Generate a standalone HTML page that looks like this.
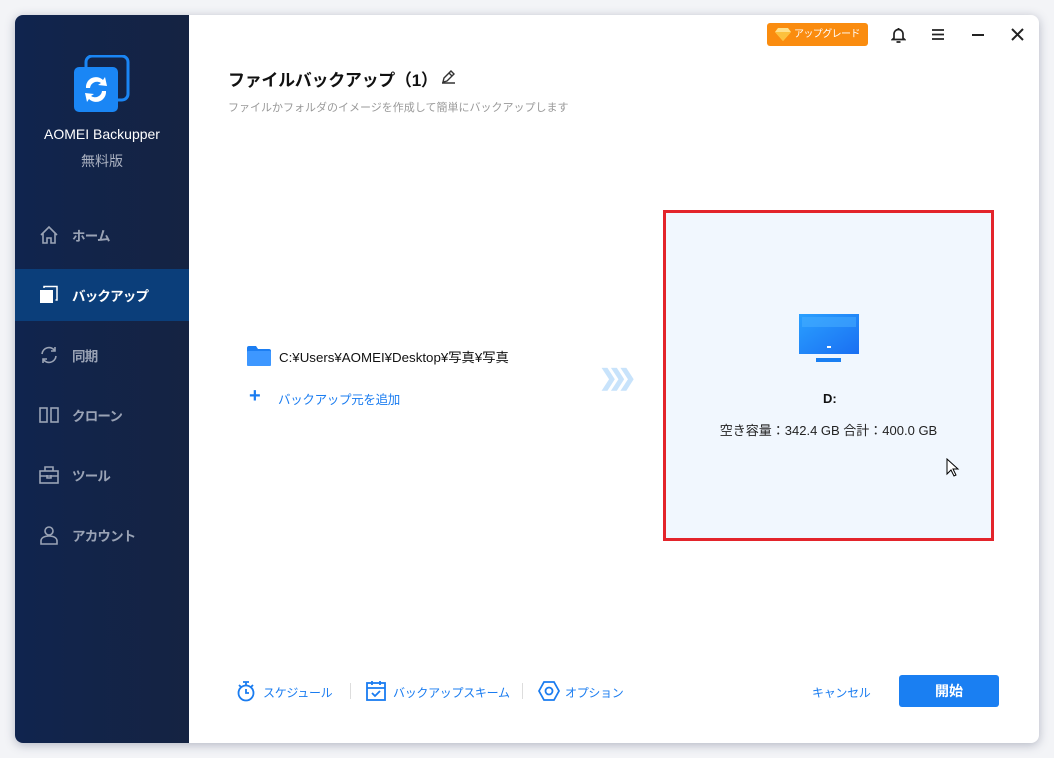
<!DOCTYPE html>
<html><head><meta charset="utf-8"><style>
*{margin:0;padding:0;box-sizing:border-box}
body{width:1054px;height:758px;background:#f3f4f7;font-family:"Liberation Sans","Noto Sans CJK JP",sans-serif;position:relative;overflow:hidden}
.win{position:absolute;left:15px;top:15px;width:1024px;height:728px;background:#fff;border-radius:8px;overflow:hidden;box-shadow:0 2px 10px rgba(60,70,100,.35)}
.side{position:absolute;left:0;top:0;width:174px;height:728px;background:linear-gradient(90deg,#10244e,#152342)}
.logo{position:absolute;left:58px;top:40px}
.brand{position:absolute;left:0;width:174px;text-align:center;color:#fff;font-size:14px;top:111px}
.free{position:absolute;left:0;width:174px;text-align:center;color:#aab1c0;font-size:14px;top:136px}
.item{position:absolute;left:0;width:174px;height:52px;display:flex;align-items:center;padding-left:24px;color:#9aa3b5;font-size:13.5px;font-weight:bold;letter-spacing:-0.8px}
.item svg{margin-right:13px}
.item.act{background:#0b3e7a;color:#fff}
.t{position:absolute;color:#111;font-size:17px;font-weight:bold;left:213px;top:51px;letter-spacing:-0.3px}
.sub{position:absolute;left:213px;top:84px;color:#999;font-size:11px}
.blue{color:#1a7cf0}
.box{position:absolute;left:648px;top:195px;width:331px;height:331px;background:#f1f7fe;border:3px solid #e3242b}
.btn{position:absolute;left:884px;top:660px;width:100px;height:32px;background:#1a7ff2;color:#fff;border-radius:3px;font-size:14px;font-weight:bold;text-align:center;line-height:32px}
.bl{position:absolute;font-size:12px;top:669px;letter-spacing:-0.3px}
</style></head><body>
<div class="win">
<div class="side">
<svg class="logo" width="58" height="58" viewBox="0 0 58 58"><rect x="13" y="1" width="42" height="44" rx="6" fill="none" stroke="#1a86f5" stroke-width="3"/><rect x="1" y="12" width="44" height="45" rx="5" fill="#1a86f5"/><path d="M13 33a10 10 0 0 1 17-8l2-3 2 9-9-1 3-2a7 7 0 0 0-11 5z" fill="#fff"/><path d="M33 36a10 10 0 0 1-17 8l-2 3-2-9 9 1-3 2a7 7 0 0 0 11-5z" fill="#fff"/></svg>
<div class="brand">AOMEI Backupper</div>
<div class="free">無料版</div>
<div class="item" style="top:194px"><svg width="20" height="20" viewBox="0 0 20 20" fill="none" stroke="#9aa3b5" stroke-width="1.6"><path d="M2 10l8-8 8 8M4 8v10h4v-5h4v5h4V8"/></svg>ホーム</div>
<div class="item act" style="top:254px"><svg width="20" height="20" viewBox="0 0 20 20"><rect x="1" y="5" width="13" height="13" fill="#fff"/><path d="M5 3V1.5h13V15h-1.5" fill="none" stroke="#fff" stroke-width="1.5"/></svg>バックアップ</div>
<div class="item" style="top:314px"><svg width="20" height="20" viewBox="0 0 20 20" fill="none" stroke="#9aa3b5" stroke-width="1.6"><path d="M3 9a7 7 0 0 1 13-3M17 11a7 7 0 0 1-13 3M16 2v4h-4M4 18v-4h4"/></svg>同期</div>
<div class="item" style="top:374px"><svg width="20" height="20" viewBox="0 0 20 20" fill="none" stroke="#9aa3b5" stroke-width="1.6"><rect x="1" y="3" width="7" height="14"/><rect x="12" y="3" width="7" height="14"/></svg>クローン</div>
<div class="item" style="top:434px"><svg width="20" height="20" viewBox="0 0 20 20" fill="none" stroke="#9aa3b5" stroke-width="1.6"><rect x="1" y="6" width="18" height="12"/><path d="M6 6V2h8v4M1 11h18M8 10v3h4v-3"/></svg>ツール</div>
<div class="item" style="top:494px"><svg width="20" height="20" viewBox="0 0 20 20" fill="none" stroke="#9aa3b5" stroke-width="1.6"><circle cx="10" cy="6" r="4"/><path d="M2 19v-3c0-3 3-5 8-5s8 2 8 5v3z"/></svg>アカウント</div>
</div>
<div style="position:absolute;left:752px;top:8px;width:101px;height:23px;background:#fa8c0f;border-radius:3px;color:#fff;font-size:10px;line-height:23px;padding-left:27px;letter-spacing:-0.6px;white-space:nowrap"><svg style="position:absolute;left:8px;top:5px" width="16" height="13" viewBox="0 0 16 13"><path d="M3 0h10l3 4-8 9-8-9z" fill="#ffe08a"/><path d="M0 4h16L8 13z" fill="#fcc13d"/></svg>アップグレード</div>
<svg style="position:absolute;left:876px;top:12px" width="15" height="16" viewBox="0 0 15 16" fill="none" stroke="#222" stroke-width="1.7"><path d="M3 11V7a4.5 4.5 0 0 1 9 0v4l1.5 1.5h-12zM5.5 15h4M7.5 1v1"/></svg>
<svg style="position:absolute;left:916px;top:13px" width="14" height="13" stroke="#222" stroke-width="1.8"><path d="M1 2h12M1 6.5h12M1 11h12"/></svg>
<svg style="position:absolute;left:956px;top:13px" width="14" height="13" stroke="#222" stroke-width="2"><path d="M1 7h12"/></svg>
<svg style="position:absolute;left:996px;top:13px" width="13" height="13" stroke="#222" stroke-width="2"><path d="M1 1l11 11M12 1L1 12"/></svg>
<div class="t">ファイルバックアップ（1）</div>
<svg style="position:absolute;left:426px;top:54px" width="15" height="15" fill="none" stroke="#333" stroke-width="1.4"><path d="M2 13l1-4 7-7 3 3-7 7zM8 4l3 3M1 14h13"/></svg>
<div class="sub">ファイルかフォルダのイメージを作成して簡単にバックアップします</div>
<svg style="position:absolute;left:232px;top:331px" width="24" height="20" viewBox="0 0 24 20"><path d="M0 2a2 2 0 0 1 2-2h7l2 3h11a2 2 0 0 1 2 2v13a2 2 0 0 1-2 2H2a2 2 0 0 1-2-2z" fill="#1c7ef2"/><rect x="0" y="5" width="24" height="15" rx="1" fill="#3d97ff"/></svg>
<div style="position:absolute;left:264px;top:332px;font-size:13.3px;color:#111">C:¥Users¥AOMEI¥Desktop¥写真¥写真</div>
<div class="blue" style="position:absolute;left:234px;top:370px;font-size:20px;font-weight:bold">+</div>
<div class="blue" style="position:absolute;left:263px;top:374px;font-size:12.5px;letter-spacing:-0.3px">バックアップ元を追加</div>
<div style="position:absolute;left:584px;top:350px;font-size:22px;font-weight:bold;color:#c8e3fb;letter-spacing:-9px">❯❯❯</div>
<div class="box"></div>
<svg style="position:absolute;left:783px;top:298px" width="62" height="50" viewBox="0 0 62 50"><defs><linearGradient id="g" x1="0" y1="0" x2="1" y2="1"><stop offset="0" stop-color="#2aa0ff"/><stop offset="1" stop-color="#1a6ff2"/></linearGradient></defs><rect x="1" y="1" width="60" height="40" fill="url(#g)"/><rect x="4" y="4" width="54" height="10" fill="#4ab0ff" opacity=".5"/><rect x="29" y="33" width="4" height="2" fill="#fff"/><rect x="18" y="45" width="25" height="4" fill="#1a7ff2"/></svg>
<div style="position:absolute;left:808px;top:376px;font-size:13px;font-weight:bold;color:#111">D:</div>
<div style="position:absolute;left:645px;width:337px;text-align:center;top:405px;font-size:13px;color:#222">空き容量：342.4 GB 合計：400.0 GB</div>
<svg style="position:absolute;left:931px;top:443px" width="14" height="20" viewBox="0 0 14 20"><path d="M1 1v15l4-4 3 6 2-1-3-6h5z" fill="#fff" stroke="#000" stroke-width="1"/></svg>
<svg style="position:absolute;left:221px;top:665px" width="20" height="22" fill="none" stroke="#1a7cf0" stroke-width="1.8"><circle cx="10" cy="13" r="7.5"/><path d="M7 2h6M10 2v3M10 9v4h3M3 5l2 2M17 5l-2 2"/></svg>
<div class="blue bl" style="left:248px">スケジュール</div>
<div style="position:absolute;left:335px;top:668px;width:1px;height:16px;background:#ddd"></div>
<svg style="position:absolute;left:351px;top:665px" width="20" height="21" fill="none" stroke="#1a7cf0" stroke-width="1.8"><rect x="1" y="3" width="18" height="17"/><path d="M1 8h18M6 1v4M14 1v4M6 13l3 3 5-5"/></svg>
<div class="blue bl" style="left:378px">バックアップスキーム</div>
<div style="position:absolute;left:507px;top:668px;width:1px;height:16px;background:#ddd"></div>
<svg style="position:absolute;left:523px;top:666px" width="22" height="20" fill="none" stroke="#1a7cf0" stroke-width="1.8"><path d="M6 1h10l5 9-5 9H6l-5-9z"/><circle cx="11" cy="10" r="3.5"/></svg>
<div class="blue bl" style="left:550px">オプション</div>
<div class="blue bl" style="left:797px">キャンセル</div>
<div class="btn">開始</div>
</div>
</body></html>
